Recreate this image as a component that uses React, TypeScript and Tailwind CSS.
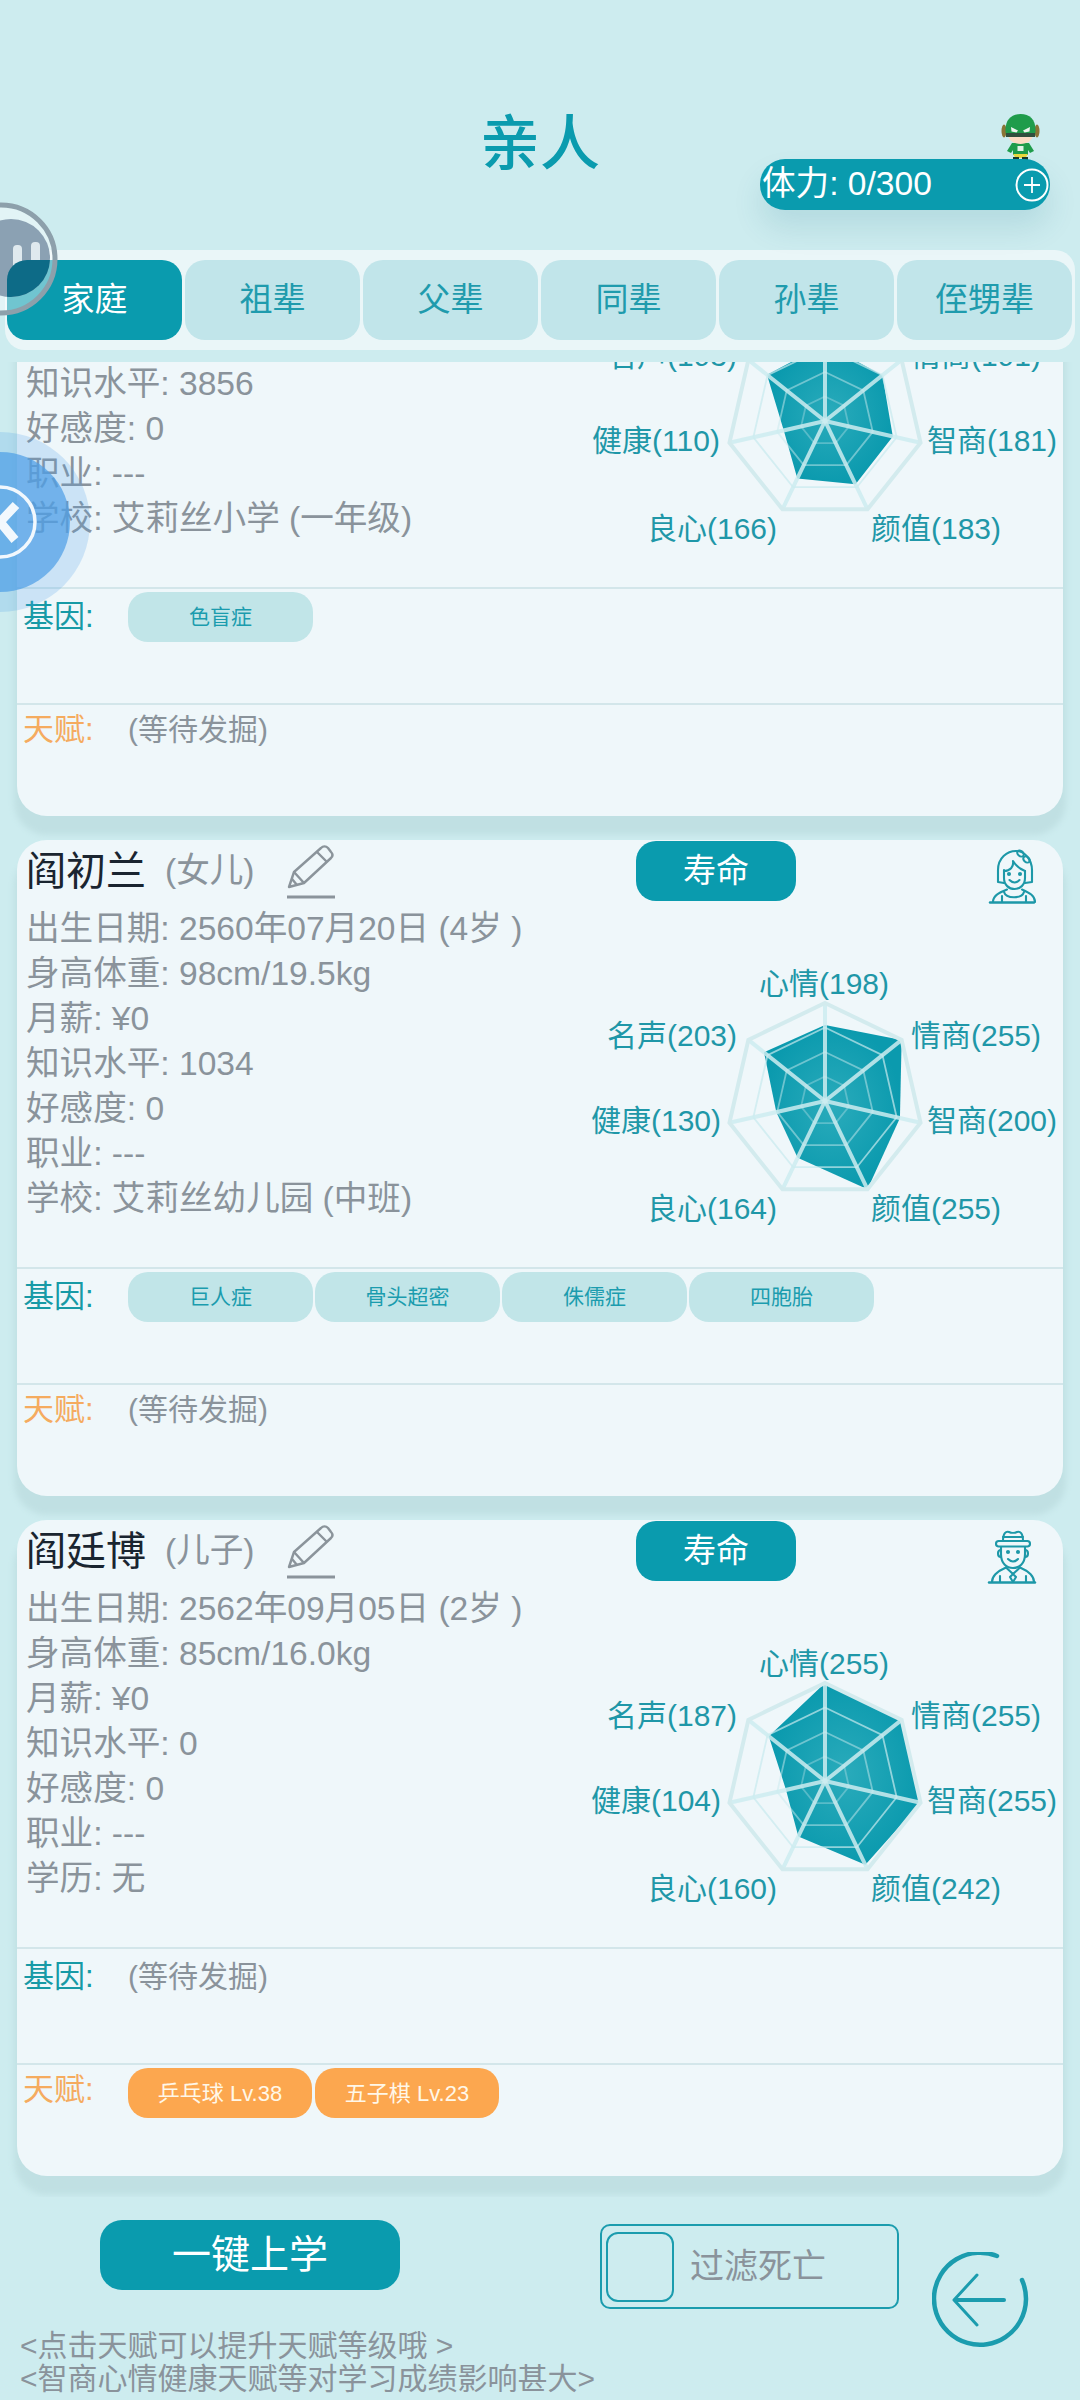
const FONT = "[font-family:'Liberation_Sans','Noto_Sans_CJK_SC',sans-serif]";

const TABS = ['家庭', '祖辈', '父辈', '同辈', '孙辈', '侄甥辈'];
const AXES = ['心情', '情商', '智商', '颜值', '良心', '健康', '名声'];
// label centres, relative to the radar svg
const LABEL_POS = [
  [234, 23],
  [386, 75],
  [402, 160],
  [346, 248],
  [122, 248],
  [66, 160],
  [82, 75],
];
const RADIUS = 98;

interface Member {
  name: string;
  role: string;
  avatar: 'girl' | 'boy' | 'none';
  rows: string[];
  stats: number[];
  genes: string[];
  talents: string[];
}

const MEMBERS: Member[] = [
  {
    name: '阎',
    role: '',
    avatar: 'none',
    rows: ['', '', '', '知识水平: 3856', '好感度: 0', '职业: ---', '学校: 艾莉丝小学 (一年级)'],
    stats: [200, 191, 181, 183, 166, 110, 193],
    genes: ['色盲症'],
    talents: [],
  },
  {
    name: '阎初兰',
    role: '(女儿)',
    avatar: 'girl',
    rows: [
      '出生日期: 2560年07月20日 (4岁 )',
      '身高体重: 98cm/19.5kg',
      '月薪: ¥0',
      '知识水平: 1034',
      '好感度: 0',
      '职业: ---',
      '学校: 艾莉丝幼儿园 (中班)',
    ],
    stats: [198, 255, 200, 255, 164, 130, 203],
    genes: ['巨人症', '骨头超密', '侏儒症', '四胞胎'],
    talents: [],
  },
  {
    name: '阎廷博',
    role: '(儿子)',
    avatar: 'boy',
    rows: [
      '出生日期: 2562年09月05日 (2岁 )',
      '身高体重: 85cm/16.0kg',
      '月薪: ¥0',
      '知识水平: 0',
      '好感度: 0',
      '职业: ---',
      '学历: 无',
    ],
    stats: [255, 255, 255, 242, 160, 104, 187],
    genes: [],
    talents: ['乒乓球 Lv.38', '五子棋 Lv.23'],
  },
];

function point(i: number, r: number) {
  const a = (i * 2 * Math.PI) / 7;
  return [235 + r * Math.sin(a), 140 - r * Math.cos(a)];
}

function ring(r: number) {
  return AXES.map((_, i) => point(i, r).join(',')).join(' ');
}

function Radar({ stats, id }: { stats: number[]; id: string }) {
  const shape = stats.map((v, i) => point(i, (v / 255) * RADIUS).join(',')).join(' ');
  return (
    <svg width="470" height="280" viewBox="0 0 470 280" className="shrink-0 mt-[55px] mr-[3px]">
      <defs>
        <radialGradient id={id}>
          <stop offset="0%" stopColor="#2aabbb" />
          <stop offset="100%" stopColor="#0b9aae" />
        </radialGradient>
      </defs>
      <polygon points={shape} fill={`url(#${id})`} />
      <polygon points={ring(RADIUS * 0.25)} fill="none" stroke="#c8e9ee" strokeOpacity="0.35" strokeWidth="1.8" />
      <polygon points={ring(RADIUS * 0.5)} fill="none" stroke="#c8e9ee" strokeOpacity="0.5" strokeWidth="1.8" />
      <polygon points={ring(RADIUS * 0.75)} fill="none" stroke="#c8e9ee" strokeOpacity="0.7" strokeWidth="1.8" />
      {AXES.map((_, i) => {
        const [x, y] = point(i, RADIUS);
        return <line key={i} x1="235" y1="140" x2={x} y2={y} stroke="#cdecf0" strokeOpacity="0.85" strokeWidth="4" />;
      })}
      <polygon points={ring(RADIUS)} fill="none" stroke="#d3ebee" strokeWidth="4" />
      {AXES.map((a, i) => (
        <text
          key={a}
          x={LABEL_POS[i][0]}
          y={LABEL_POS[i][1] + 10}
          textAnchor="middle"
          fontSize="30"
          fill="#1f97a8"
        >
          {a}({stats[i]})
        </text>
      ))}
    </svg>
  );
}

function Pencil() {
  return (
    <svg width="52" height="56" viewBox="0 0 52 56" fill="none" stroke="#8b949b" strokeWidth="2.4" className="absolute left-[267px] top-[4px]">
      <path d="M5 43 L10 28 L37 4 C39 2 42 2 44 4 L47 8 C49 10 49 12 47 14 L20 39 Z" strokeLinejoin="round" />
      <path d="M10 28 L20 39 M33 8 L43 18 M8 35 L13 41" />
      <path d="M3 53 H51" strokeWidth="3" />
    </svg>
  );
}

function Girl() {
  return (
    <svg width="75" height="75" viewBox="0 0 75 75" fill="none" stroke="#1d98a8" strokeWidth="2.1" strokeLinecap="round" strokeLinejoin="round">
      <path d="M29 43 L23 42 V30 C23 18 32 11 41 11 C50 11 57 20 57 30 V42 L50 43" />
      <path d="M29 30 V38 C29 45 34 49 39.5 49 C45 49 50 45 50 38 V31" />
      <path d="M29 31 C35 31 39 27 38 21 C41 26 45 29 50 31" />
      <ellipse cx="45.5" cy="13.5" rx="3.6" ry="2.6" transform="rotate(40 45.5 13.5)" />
      <ellipse cx="51.5" cy="19.5" rx="3.6" ry="2.6" transform="rotate(40 51.5 19.5)" />
      <circle cx="34" cy="34" r="1" fill="#1d98a8" />
      <circle cx="45" cy="34" r="1" fill="#1d98a8" />
      <path d="M34.5 40 Q39.5 45 44.5 40" />
      <path d="M18 62 C18 56 23 53 32 49.5 M60 62 C60 56 55 53 47 49.5 M27 62 V56 M51 62 V56 M29 52 C31 59 47 59 49 52" />
      <path d="M15 62.5 H59" strokeWidth="2.4" />
    </svg>
  );
}

function Boy() {
  return (
    <svg width="75" height="75" viewBox="0 0 75 75" fill="none" stroke="#1d98a8" strokeWidth="2.1" strokeLinecap="round" strokeLinejoin="round">
      <path d="M28 21 C28 13 31 11 34 12 C36 13 40 13 42 12 C45 11 48 13 48 21" />
      <path d="M28 17 H48" />
      <rect x="21" y="21" width="34" height="5.5" rx="2.7" />
      <path d="M26 27 V34 C26 44 32 48 38 48 C44 48 50 44 50 34 V27" />
      <path d="M26 30 C22 30 22 37 26 37 M50 30 C54 30 54 37 50 37" />
      <circle cx="33" cy="32" r="1" fill="#1d98a8" />
      <circle cx="43" cy="32" r="1" fill="#1d98a8" />
      <path d="M33 39 Q38 44 43 39" />
      <path d="M17 62 C17 55 23 51 31 47.5 M59 62 C59 55 53 51 45 47.5" />
      <path d="M31 47.5 L38 54 L45 47.5 M38 54 L35 57 L38 62 L41 57 Z M25 56 V62 M51 56 V62" />
      <path d="M14 62.5 H60" strokeWidth="2.4" />
    </svg>
  );
}

function Card({ m, index }: { m: Member; index: number }) {
  return (
    <div className="h-[656px] mb-[24px] rounded-[30px] bg-[#eff7fa] shadow-[0_16px_6px_3px_#c0e0e3] text-[#8a939b]">
      <div className="h-[427px]">
        <div className="flex h-[66px] items-start">
          <div className="relative flex h-[62px] w-[619px] items-center pl-[9px]">
            <span className="w-[139px] text-[40px] text-[#1a2530]">{m.name}</span>
            <span className="text-[33.6px]">{m.role}</span>
            {m.avatar !== 'none' && <Pencil />}
          </div>
          <div className="mt-[1px] flex h-[60px] w-[160px] items-center justify-center rounded-[20px] bg-[#0a9bae] text-[33px] text-white">
            寿命
          </div>
          <div className="ml-[179px]">
            {m.avatar === 'girl' && <Girl />}
            {m.avatar === 'boy' && <Boy />}
          </div>
        </div>
        <div className="flex justify-between">
          <div className="pl-[9px]">
            {m.rows.map((r, i) => (
              <div key={i} className="h-[45px] text-[33.6px] leading-[45px] whitespace-nowrap">
                {r}
              </div>
            ))}
          </div>
          <Radar stats={m.stats} id={`fill-${index}`} />
        </div>
      </div>
      <div className="flex h-[116px] border-t-2 border-[#d3e6ea] pl-[6px] pt-[3px]">
        <span className="w-[105px] text-[31px] leading-[50px] text-[#179aa6]">基因:</span>
        <div className="flex gap-[2px]">
          {m.genes.map((g) => (
            <div key={g} className="flex h-[50px] w-[185px] items-center justify-center rounded-[20px] bg-[#c1e5e8] text-[21px] text-[#1b9cae]">
              {g}
            </div>
          ))}
          {m.genes.length === 0 && <span className="text-[30px] leading-[50px]">(等待发掘)</span>}
        </div>
      </div>
      <div className="flex border-t-2 border-[#d3e6ea] pl-[6px] pt-[3px]">
        <span className="w-[105px] text-[31px] leading-[44px] text-[#f5ab5f]">天赋:</span>
        <div className="flex gap-[3px]">
          {m.talents.map((t) => (
            <div key={t} className="flex h-[50px] w-[184px] items-center justify-center rounded-[20px] bg-[#fca74f] text-[22px] text-[#fff7e8]">
              {t}
            </div>
          ))}
          {m.talents.length === 0 && <span className="text-[30px] leading-[44px]">(等待发掘)</span>}
        </div>
      </div>
    </div>
  );
}

function Hero() {
  return (
    <svg width="80" height="110" viewBox="0 0 80 110" className="absolute left-[980px] top-[105px]">
      <ellipse cx="24" cy="26" rx="2.5" ry="6.5" fill="#8a7436" />
      <ellipse cx="57" cy="26" rx="2.5" ry="6.5" fill="#8a7436" />
      <path d="M32 38 H49 L54 46 L50 48 L48 45 V50 H33 V45 L31 48 L27 46 Z" fill="#1f9c4b" />
      <rect x="37.5" y="41" width="6" height="5" fill="#dff3e6" />
      <path d="M33 49 H48 L45.5 53 H35.5 Z" fill="#e9d83e" />
      <rect x="33" y="52" width="6" height="3" fill="#1c3a28" />
      <rect x="42" y="52" width="6" height="3" fill="#1c3a28" />
      <path d="M28 30 C28 35 34 39 40.5 39 C47 39 53 35 53 30 Z" fill="#fbdcc4" />
      <path d="M25.5 26 C25 15 31 9 40.5 9 C50 9 56 15 55.5 26 L55 30 H26 Z" fill="#1f9c4b" />
      <path d="M26 28 H55 V32 H26 Z" fill="#31503e" />
      <path d="M31 22 L38 25.5 L36.5 27.5 L31.5 26.5 Z M50 22 L43 25.5 L44.5 27.5 L49.5 26.5 Z" fill="#eef5ef" />
    </svg>
  );
}

export default function App() {
  return (
    <div className={`relative h-[2400px] w-[1080px] overflow-hidden bg-[#cdecef] ${FONT}`}>
      <div className="h-[250px] pt-[104px] text-center text-[60px] leading-[82px] font-medium text-[#0a9bae]">亲人</div>

      <Hero />
      {/* stamina pill sits over the header */}
      <div className="absolute left-[760px] top-[159px] flex h-[51px] w-[290px] items-center justify-between rounded-[25px] bg-[#0a9bae] pl-[2px] pr-[1px] text-[33.6px] text-white shadow-[0_18px_30px_rgba(0,100,120,0.12)]">
        <span>体力: 0/300</span>
        <svg width="34" height="34" viewBox="0 0 34 34" fill="none" stroke="white">
          <circle cx="17" cy="17" r="15.5" strokeWidth="2" />
          <path d="M17 9 V25 M9 17 H25" strokeWidth="1.8" />
        </svg>
      </div>

      <div className="mx-[5px] flex h-[100px] gap-[3px] rounded-[20px] bg-[#eaf6f8] py-[10px] pl-[2px] pr-[3px]">
        {TABS.map((t, i) => (
          <div
            key={t}
            className={`flex flex-1 items-center justify-center rounded-[20px] text-[33px] ${
              i === 0 ? 'bg-[#0a9bae] text-white' : 'bg-[#c1e5ea] text-[#1f9bad]'
            }`}
          >
            {t}
          </div>
        ))}
      </div>

      <div className="mt-[12px] h-[1835px] overflow-hidden px-[17px]">
        <div className="-mt-[202px]">
          {MEMBERS.map((m, i) => (
            <Card key={i} m={m} index={i} />
          ))}
        </div>
      </div>

      <div className="flex h-[132px] items-start">
        <div className="ml-[100px] mt-[23px] flex h-[70px] w-[300px] items-center justify-center rounded-[22px] bg-[#0a9bae] text-[39px] text-white">
          一键上学
        </div>
        <div className="ml-[200px] mt-[27px] flex h-[85px] w-[299px] items-center rounded-[10px] border-2 border-[#1b9cae] pl-[4px] text-[34px] text-[#8a939b]">
          <div className="h-[70px] w-[68px] rounded-[12px] border-2 border-[#1b9cae]" />
          <span className="ml-[16px]">过滤死亡</span>
        </div>
        <svg width="100" height="100" viewBox="0 0 100 100" fill="none" stroke="#1b9cae" className="ml-[33px] mt-[55px] shrink-0">
          <path d="M90 28 A46 46 0 1 1 65 4" strokeWidth="4.5" strokeLinecap="round" />
          <path d="M45 23 L22 48 L45 73" strokeWidth="3" strokeLinecap="round" strokeLinejoin="round" />
          <path d="M24 48 H72" strokeWidth="4" strokeLinecap="round" />
        </svg>
      </div>

      <div className="pl-[20px] text-[30px] leading-[33px] text-[#8a939b]">
        <div>&lt;点击天赋可以提升天赋等级哦 &gt;</div>
        <div>&lt;智商心情健康天赋等对学习成绩影响甚大&gt;</div>
      </div>

      {/* floating pause ball */}
      <svg width="120" height="140" viewBox="0 0 120 140" className="absolute left-0 top-[190px]">
        <defs>
          <clipPath id="tab-clip">
            <rect x="7" y="70" width="175" height="80" rx="20" />
          </clipPath>
        </defs>
        <circle cx="1" cy="69" r="54" fill="white" fillOpacity="0.42" stroke="#8da0ab" strokeWidth="5" />
        <circle cx="11" cy="68" r="39" fill="#8ba1b3" />
        <rect x="13" y="55" width="9" height="24" rx="4" fill="#dfe9ee" />
        <rect x="31" y="52" width="9" height="24" rx="4" fill="#dfe9ee" />
        <circle cx="11" cy="68" r="39" fill="#0d6b87" clipPath="url(#tab-clip)" />
      </svg>

      {/* floating blue ball */}
      <svg width="92" height="182" viewBox="0 0 92 182" className="absolute left-0 top-[432px]">
        <circle cx="0" cy="90" r="90" fill="#4ea0e6" fillOpacity="0.22" />
        <circle cx="0" cy="90" r="70" fill="#4f9fe6" fillOpacity="0.72" />
        <circle cx="0" cy="90" r="35" fill="none" stroke="#f2f8fd" strokeWidth="3.5" />
        <path d="M16 73 L0 90 L15 108" fill="none" stroke="#f2f8fd" strokeWidth="9" />
      </svg>
    </div>
  );
}
